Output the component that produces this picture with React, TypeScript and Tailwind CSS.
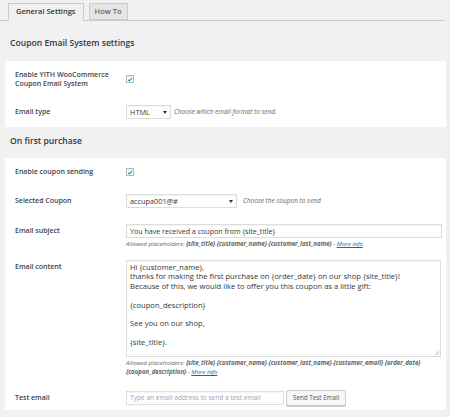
import React from "react";

const font = { fontFamily: '"Open Sans", "Noto Sans", "Liberation Sans", sans-serif' };

function Check() {
  return (
    <div className="w-[8px] h-[8px] border border-[#b4b9be] bg-white shadow-[inset_0_1px_1px_rgba(0,0,0,0.1)] flex items-center justify-center">
      <svg width="7" height="7" viewBox="0 0 10 10">
        <path d="M1.8 5.2 L4 7.4 L8.4 2.2" fill="none" stroke="#1e8cbe" strokeWidth="1.8" />
      </svg>
    </div>
  );
}

function Select({ value, w }: { value: string; w: string }) {
  return (
    <div className={`${w} h-[14px] border border-[#ddd] bg-white shadow-[inset_0_1px_1px_rgba(0,0,0,0.05)] flex items-center justify-between pl-[3px] pr-[3px] text-[7.3px] text-[#32373c]`}>
      <span>{value}</span>
      <svg width="4" height="3" viewBox="0 0 4 3">
        <path d="M0 0 L4 0 L2 3 Z" fill="#333" />
      </svg>
    </div>
  );
}

const labelCls = "w-[121px] pl-[10px] shrink-0 text-[7px] font-semibold text-[#3c434a]";
const headCls = "text-[8.6px] leading-[14px] font-semibold text-[#32373c]";

export default function App() {
  return (
    <div style={font} className="w-[450px] h-[417px] bg-[#f1f1f1] overflow-hidden">
      {/* Tabs */}
      <div className="pt-[3px] pl-[8px] mr-[5px] border-b border-[#ccc] flex gap-[5px] h-[21px]">
        <div className="h-[18px] px-[7px] border border-[#ccc] border-b-[#f1f1f1] bg-[#f1f1f1] text-[7.5px] font-semibold text-[#32373c] flex items-center">
          General Settings
        </div>
        <div className="h-[17px] px-[5px] border border-[#ccc] bg-[#e5e5e5] text-[7.5px] font-semibold text-[#666] flex items-center">
          How To
        </div>
      </div>

      <div className="pt-[15px] pb-[11px] pl-[10px]">
        <div className={headCls}>Coupon Email System settings</div>
      </div>

      {/* Panel 1 */}
      <div className="ml-[5px] w-[441px] bg-white">
        <div className="flex items-center h-[36px]">
          <div className={`${labelCls} leading-[9px] pr-[10px]`}>Enable YITH WooCommerce Coupon Email System</div>
          <Check />
        </div>
        <div className="flex items-center h-[30px]">
          <div className={labelCls}>Email type</div>
          <Select value="HTML" w="w-[45px]" />
          <span className="ml-[3px] text-[6.5px] italic text-[#666]">Choose which email format to send.</span>
        </div>
      </div>

      <div className="pt-[7px] pb-[10px] pl-[10px]">
        <div className={headCls}>On first purchase</div>
      </div>

      {/* Panel 2 */}
      <div className="ml-[5px] w-[441px] bg-white pb-[5px]">
        <div className="flex items-center h-[28px]">
          <div className={labelCls}>Enable coupon sending</div>
          <Check />
        </div>
        <div className="flex items-center h-[30px]">
          <div className={labelCls}>Selected Coupon</div>
          <Select value="accupa001@#" w="w-[111px]" />
          <span className="ml-[6px] text-[6.5px] italic text-[#666]">Choose the coupon to send</span>
        </div>
        <div className="flex items-start pt-[8px] h-[36px]">
          <div className={`${labelCls} leading-[14px]`}>Email subject</div>
          <div className="flex flex-col gap-[1px]">
            <div className="w-[316px] h-[14px] border border-[#ddd] bg-white shadow-[inset_0_1px_1px_rgba(0,0,0,0.05)] flex items-center px-[3px] text-[7.1px] text-[#32373c]">
              You have received a coupon from {"{site_title}"}
            </div>
            <div className="text-[6.1px] italic text-[#666] leading-[9px]">
              Allowed placeholders:{" "}
              <span className="font-bold">{"{site_title} {customer_name} {customer_last_name}"}</span> -{" "}
              <span className="text-[#0073aa] underline">More info</span>
            </div>
          </div>
        </div>
        <div className="flex items-start pt-[8px] h-[129px]">
          <div className={`${labelCls} leading-[9px] pt-[2px]`}>Email content</div>
          <div className="flex flex-col gap-[1px]">
            <div className="relative w-[315px] h-[97px] border border-[#ddd] bg-white shadow-[inset_0_1px_1px_rgba(0,0,0,0.05)] px-[3px] pt-[2px] text-[7.6px] leading-[9.4px] text-[#32373c]">
              <div>Hi {"{customer_name}"},</div>
              <div>thanks for making the first purchase on {"{order_date}"} on our shop {"{site_title}"}!</div>
              <div>Because of this, we would like to offer you this coupon as a little gift:</div>
              <div>&nbsp;</div>
              <div>{"{coupon_description}"}</div>
              <div>&nbsp;</div>
              <div>See you on our shop,</div>
              <div>&nbsp;</div>
              <div>{"{site_title}"}.</div>
              <svg className="absolute right-[1px] bottom-[1px]" width="5" height="5" viewBox="0 0 5 5">
                <path d="M5 1 L1 5 M5 3 L3 5" stroke="#aaa" strokeWidth="0.7" />
              </svg>
            </div>
            <div className="text-[6.1px] italic text-[#666] leading-[9px]">
              Allowed placeholders:{" "}
              <span className="font-bold">
                {"{site_title} {customer_name} {customer_last_name} {customer_email} {order_date}"}
              </span>
              <br />
              <span className="font-bold">{"{coupon_description}"}</span> -{" "}
              <span className="text-[#0073aa] underline">More info</span>
            </div>
          </div>
        </div>
        <div className="flex items-start pt-[10px] h-[24px]">
          <div className={`${labelCls} leading-[14px]`}>Test email</div>
          <div className="w-[158px] h-[14px] border border-[#ddd] bg-white shadow-[inset_0_1px_1px_rgba(0,0,0,0.05)] flex items-center px-[3px] text-[6.6px] text-[#a0a5aa]">
            Type an email address to send a test email
          </div>
          <div className="ml-[2px] -mt-[1px] h-[16px] px-[6px] border border-[#ccc] bg-[#f7f7f7] shadow-[0_1px_0_#ccc] rounded-[2px] flex items-center text-[6.3px] text-[#555]">
            Send Test Email
          </div>
        </div>
      </div>
    </div>
  );
}
